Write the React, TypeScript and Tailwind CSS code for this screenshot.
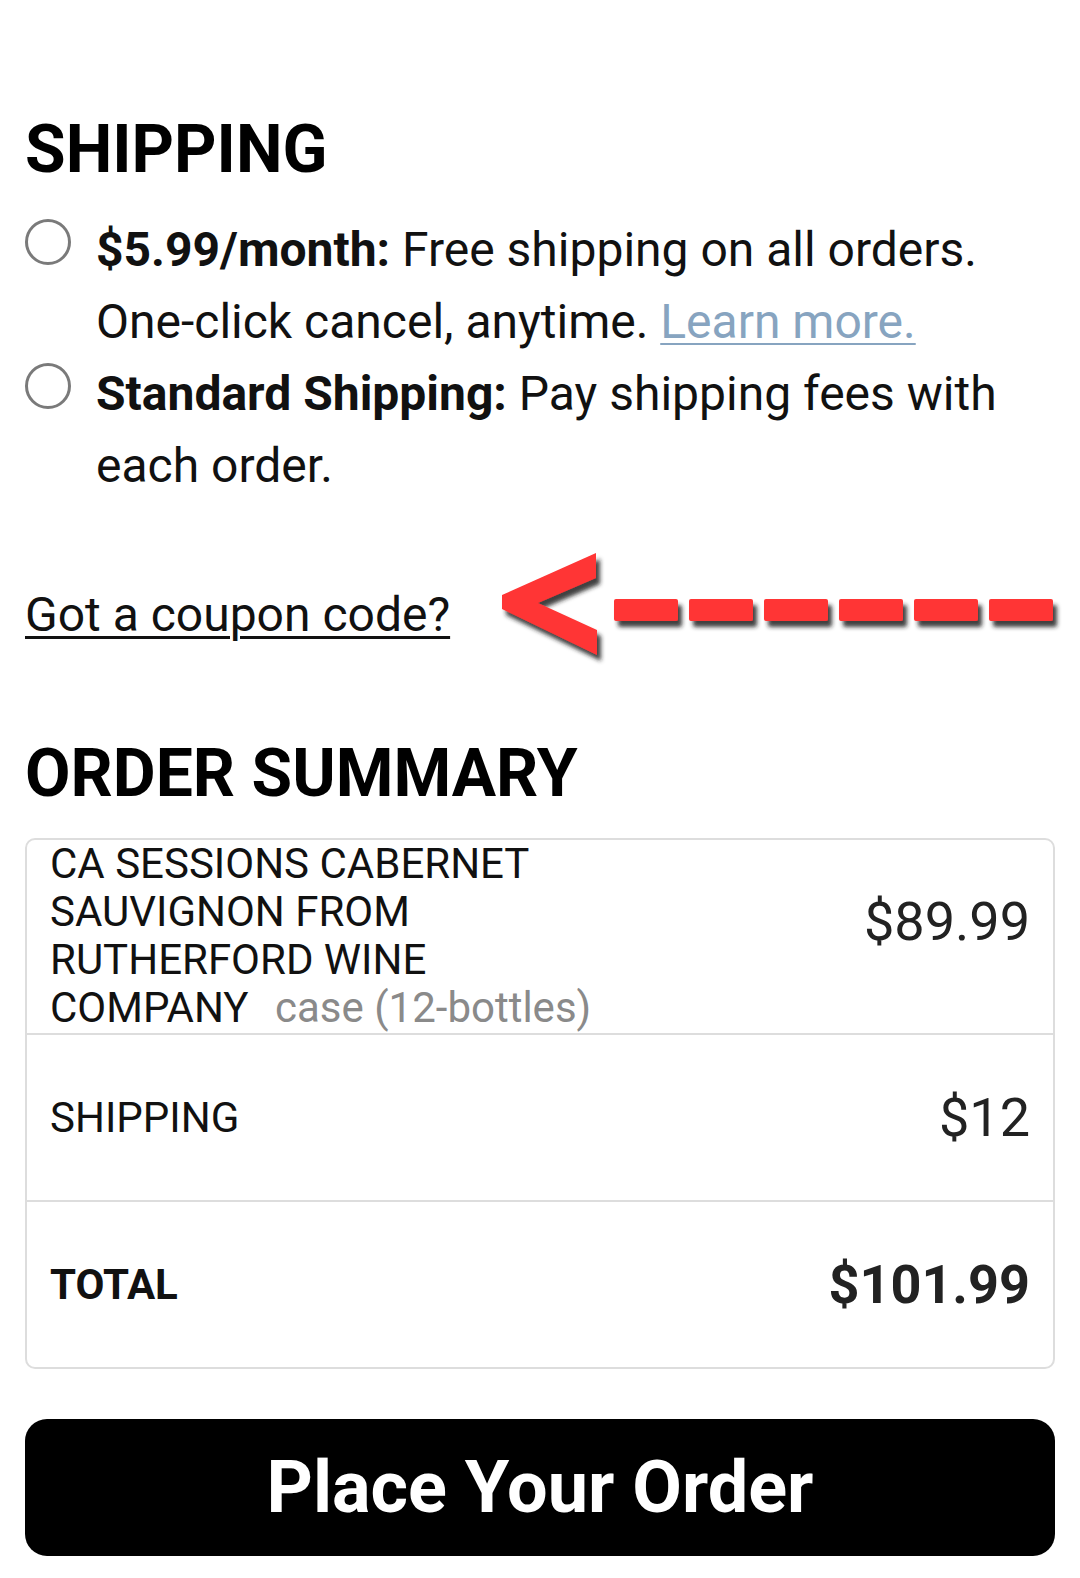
import React from 'react';

function Radio() {
  return <span className="mt-[5px] block h-[46px] w-[46px] shrink-0 rounded-full border-[3px] border-[#7a7a7a] bg-white" />;
}

function CouponArrow() {
  const dashes = [612, 687, 762, 837, 912, 987];
  return <svg width="580" height="140" viewBox="490 545 580 140" className="-my-[34px] ml-[42px] shrink-0">
      <defs>
        <filter id="arrowShadow" x="-10%" y="-30%" width="120%" height="170%">
          <feDropShadow dx="4" dy="6" stdDeviation="2.2" floodColor="#1f1f1f" floodOpacity="0.85" />
        </filter>
      </defs>
      <g filter="url(#arrowShadow)" fill="#ff3434">
        <polygon points="500,595 594,553 594,578 536,603 595,630 595,655 500,609" />
        {dashes.map(x => <rect key={x} x={x} y={599} width={64} height={22} rx={2} />)}
      </g>
    </svg>;
}

export default function App() {
  return <div className="min-h-[1578px] bg-white px-[25px] pt-[117px] pb-[20px] font-['Roboto',sans-serif] text-[#111]">
      {/* Shipping */}
      <h2 className="text-[66px] font-bold leading-none text-black">SHIPPING</h2>

      <div className="mt-[31px] text-[48px] leading-[72px]">
        <label className="flex gap-[25px]">
          <Radio />
          <span>
            <b className="font-bold">$5.99/month:</b> Free shipping on all orders. One-click cancel, anytime.{' '}
            <a href="#" className="text-[#87a4c0] underline decoration-2 underline-offset-[5px]">Learn more.</a>
          </span>
        </label>
        <label className="flex gap-[25px]">
          <Radio />
          <span>
            <b className="font-bold">Standard Shipping:</b> Pay shipping fees with each order.
          </span>
        </label>
      </div>

      <div className="mt-[77px] flex h-[72px] items-center">
        <a href="#" className="shrink-0 whitespace-nowrap text-[48px] leading-[72px] text-[#111] underline decoration-[3px] underline-offset-[5px]">
          Got a coupon code?
        </a>
        <CouponArrow />
      </div>

      {/* Order summary */}
      <h2 className="mt-[90px] text-[66px] font-bold leading-none text-black">ORDER SUMMARY</h2>

      <div className="mt-[31px] overflow-hidden rounded-[10px] border-2 border-[#dddddd]">
        <div className="flex justify-between border-b-2 border-[#dddddd] pl-[23px] pr-[23px] pb-px">
          <div className="w-[560px] text-[42px] leading-[48px] text-[#111]">
            CA SESSIONS CABERNET SAUVIGNON FROM RUTHERFORD WINE COMPANY{' '}
            <span className="ml-4 text-[#8a8a8a]">case (12-bottles)</span>
          </div>
          <div className="mt-[55px] self-start text-[54px] leading-none text-[#222]">$89.99</div>
        </div>
        <div className="flex h-[167px] items-center justify-between border-b-2 border-[#dddddd] pl-[23px] pr-[23px]">
          <span className="text-[42px] leading-none text-[#111]">SHIPPING</span>
          <span className="text-[54px] leading-none text-[#222]">$12</span>
        </div>
        <div className="flex h-[165px] items-center justify-between pl-[23px] pr-[23px]">
          <span className="text-[42px] font-bold leading-none text-[#111]">TOTAL</span>
          <span className="text-[54px] font-bold leading-none text-[#222]">$101.99</span>
        </div>
      </div>

      <button className="mt-[50px] flex h-[137px] w-full items-center justify-center rounded-[22px] bg-black text-[72px] font-bold leading-none text-white">
        Place Your Order
      </button>
    </div>;
}
